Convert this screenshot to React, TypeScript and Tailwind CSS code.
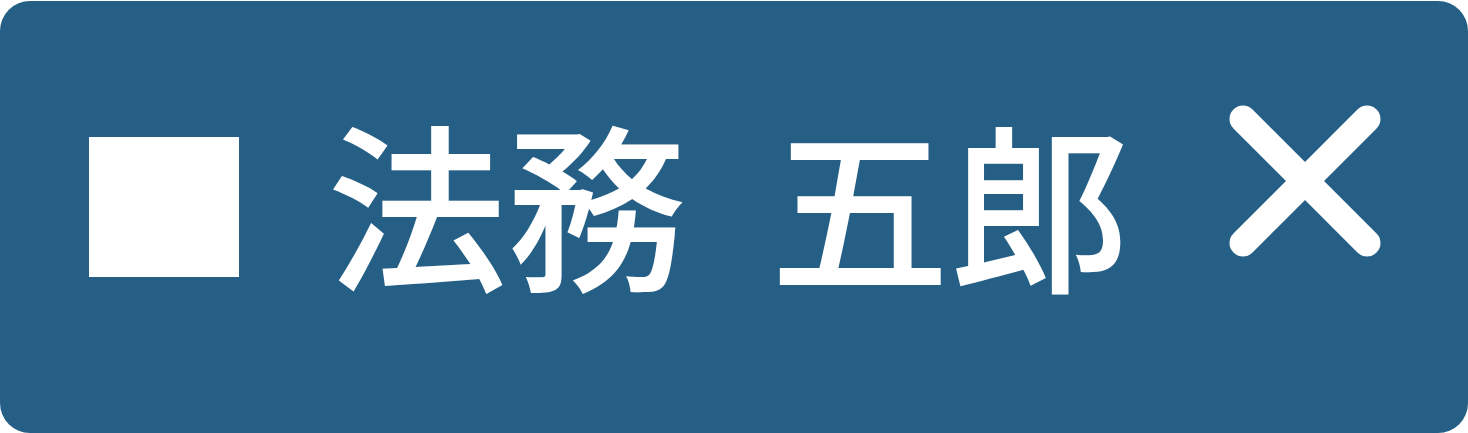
import React from 'react';

const App: React.FC = () => {
  return (
    <div className="w-[1468px] h-[433px] bg-white">
      <div className="flex items-center h-[432px] mt-px rounded-[30px] bg-[#265f85] pl-[89px] text-white">
        {/* Checkbox square */}
        <div className="w-[150px] h-[140px] bg-white shrink-0 mt-[-20px]" />

        {/* Name */}
        <span
          className="ml-[88px] mt-[-34px] text-[180px] font-medium leading-none whitespace-nowrap"
          style={{ fontFamily: '"Noto Sans CJK JP", sans-serif' }}
        >
          法務<span className="inline-block w-[83px]" />五郎
        </span>

        {/* Close */}
        <button className="ml-auto mr-[75px] mt-[-72px] p-0" aria-label="削除">
          <svg width="176" height="176" viewBox="0 0 176 176" fill="none">
            <path d="M26 26 L150 150 M150 26 L26 150" stroke="white" strokeWidth="27" strokeLinecap="round" />
          </svg>
        </button>
      </div>
    </div>
  );
};

export default App;
